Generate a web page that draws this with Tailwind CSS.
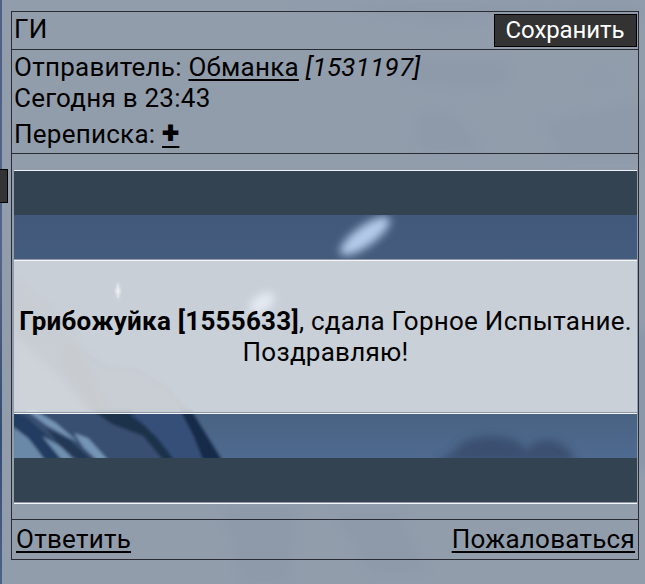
<!DOCTYPE html>
<html lang="ru">
<head>
    <meta charset="UTF-8">
    <meta name="viewport" content="width=device-width, initial-scale=1.0">
    <title>ГИ</title>
    <script src="https://cdn.jsdelivr.net/npm/@tailwindcss/browser@4"></script>
</head>
<body class="relative h-[584px] overflow-hidden bg-[#929dac] font-['Roboto',sans-serif] text-[26px] leading-[31px] tracking-[0.25px] text-black">
    <!-- Page background -->
    <svg class="absolute inset-0 -z-10" width="645" height="584" viewBox="0 0 645 584">
        <defs>
            <filter id="soft"><feGaussianBlur stdDeviation="6"/></filter>
            <linearGradient id="edge" x1="0" y1="0" x2="0" y2="1">
                <stop offset="0" stop-color="#4e6088"/>
                <stop offset=".45" stop-color="#53648a"/>
                <stop offset=".75" stop-color="#354c74"/>
                <stop offset="1" stop-color="#4b628a"/>
            </linearGradient>
        </defs>
        <rect width="645" height="584" fill="#929dac"/>
        <g filter="url(#soft)" fill="#8593a6" opacity=".3">
            <path d="M280 0H645V20L540 14L440 26L360 12Z"/>
            <path d="M400 60H510V85L470 90L400 82Z"/>
            <path d="M590 72L615 74L610 82L592 84Z"/>
            <path d="M410 120Q440 95 470 130T460 152H420Z"/>
            <path d="M540 120L645 100V160H560Z"/>
            <path d="M220 505H300L290 584H240Z"/>
            <path d="M330 510H400L430 575H370Z"/>
        </g>
        <path d="M639 330H645V470H639Z" fill="#7486a2" opacity=".6" filter="url(#soft)"/>
        <rect width="2" height="584" fill="url(#edge)"/>
    </svg>
    <!-- Side tab -->
    <div class="absolute top-[169px] left-0 h-[34px] w-2 border border-l-0 border-black bg-[#333]"></div>

    <div class="pt-[11px] pl-[11px]">
        <div class="flex h-[549px] w-[628px] flex-col border border-[#292d33]">
            <div class="flex h-[38px] items-start justify-between border-b border-[#292d33] pt-0.5 pr-px pl-0.5">
                <span>ГИ</span>
                <button class="h-[33px] w-[143px] border border-black bg-[#333] pr-px text-[24px] leading-[29px] tracking-[-0.1px] text-white">Сохранить</button>
            </div>
            <div class="h-[104px] border-b border-[#292d33] pt-0.5 pl-0.5">
                <p>Отправитель: <a class="underline decoration-2 underline-offset-3">Обманка</a> <i>[1531197]</i></p>
                <p>Сегодня в 23:43</p>
                <p class="pt-0.5">Переписка: <a class="text-[32px] leading-none font-black underline decoration-2 underline-offset-3">+</a></p>
            </div>
            <div class="flex h-[366px] flex-col border-b border-[#292d33] pt-4 pr-px pl-0.5">
                <!-- Message frame -->
                <div class="relative isolate flex h-[334px] flex-col">
                    <svg class="absolute top-[45px] left-0 -z-10" width="623" height="243" viewBox="14 215 623 243" preserveAspectRatio="none">
                        <defs>
                            <linearGradient id="sky" x1="0" y1="0" x2="0" y2="1">
                                <stop offset="0" stop-color="#42597b"/>
                                <stop offset=".8" stop-color="#486281"/>
                                <stop offset="1" stop-color="#4e6a8f"/>
                            </linearGradient>
                            <filter id="b1"><feGaussianBlur stdDeviation="1.5"/></filter>
                            <filter id="b3"><feGaussianBlur stdDeviation="3"/></filter>
                            <filter id="b4" x="-50%" y="-50%" width="200%" height="200%"><feGaussianBlur stdDeviation="4"/></filter>
                        </defs>
                        <rect x="14" y="215" width="623" height="243" fill="url(#sky)"/>
                        <ellipse cx="365" cy="236" rx="30" ry="10" fill="#b4caeb" transform="rotate(-36 365 236)" filter="url(#b4)"/>
                        <ellipse cx="262" cy="303" rx="14" ry="8" fill="#b4caeb" transform="rotate(-36 262 303)" filter="url(#b4)"/>
                        <path d="M118 281L119 289L121 291L119 293L118 301L117 293L115 291L117 289Z" fill="#fff" filter="url(#b1)"/>
                        <path d="M118 284V298" stroke="#c4d4e8" stroke-width="1"/>
                        <!-- Wing behind the text panel -->
                        <g filter="url(#b3)">
                            <path d="M14 275L55 306L83 350L105 368L135 371L166 388L191 414H14Z" fill="#3a4654" opacity=".35"/>
                            <path d="M70 335L83 360L112 414H92L60 360Z" fill="#3d3a30" opacity=".25"/>
                            <path d="M14 335L58 375L92 414H14Z" fill="#6a8098" opacity=".5"/>
                        </g>
                        <path d="M83 352L105 368L135 370L166 388L189 414" fill="none" stroke="#2c3642" stroke-width="2" opacity=".45" filter="url(#b1)"/>
                        <!-- Wing below the text panel -->
                        <g filter="url(#b1)">
                            <path d="M14 412H191L222 462H14Z" fill="#384f72"/>
                            <path d="M92 410H131L151 432Q167 444 174 460H163L143 436L112 424Z" fill="#1d304c"/>
                            <path d="M129 414H182L203 460H174L151 430Z" fill="#35507a" opacity=".8"/>
                            <path d="M180 410H191L222 460H203L194 437Z" fill="#172b49"/>
                            <path d="M14 426L28 437L46 462H10Z" fill="#6b88a8"/>
                            <path d="M12 412L25 416L48 436L68 460H46L28 438L12 426Z" fill="#203b60"/>
                            <path d="M42 436L60 446L74 460H62Z" fill="#7090b0"/>
                            <path d="M26 410H34L56 423L78 442L66 436L46 425Z" fill="#7594b6"/>
                            <path d="M74 433L88 438L108 460H97L84 448Z" fill="#7594b6"/>
                            <path d="M46 428L70 440L92 460H78L59 445Z" fill="#213854"/>
                        </g>
                        <path d="M434 462Q452 455 462 443Q478 434 500 437Q520 438 527 452Q534 438 550 440Q567 443 577 462Z" fill="#3a4f71" filter="url(#b4)"/>
                    </svg>
                    <div class="h-[45px] shrink-0 border-t border-[#eef1f7] bg-[#344352]"></div>
                    <div class="h-11 shrink-0"></div>
                    <div class="flex h-[155px] shrink-0 flex-col border-y border-t-[#929aa5] border-b-[#f4f6fa]">
                        <div class="flex h-[153px] flex-col items-center justify-center border-t border-b border-t-[#f4f6fa] border-b-[#8f98a6] bg-[#f5f5f6]/75 text-center">
                            <p class="whitespace-nowrap"><b>Грибожуйка [1555633]</b>, сдала Горное Испытание.</p>
                            <p>Поздравляю!</p>
                        </div>
                    </div>
                    <div class="h-11 shrink-0"></div>
                    <div class="h-[46px] shrink-0 border-b border-[#f4f6fa] bg-[#344352]">
                        <div class="h-[45px] border-b border-[#929aa5]"></div>
                    </div>
                </div>
            </div>
            <div class="flex justify-between pt-1 pr-[3px] pl-1">
                <a class="underline decoration-2 underline-offset-3">Ответить</a>
                <a class="underline decoration-2 underline-offset-3">Пожаловаться</a>
            </div>
        </div>
    </div>
</body>
</html>
